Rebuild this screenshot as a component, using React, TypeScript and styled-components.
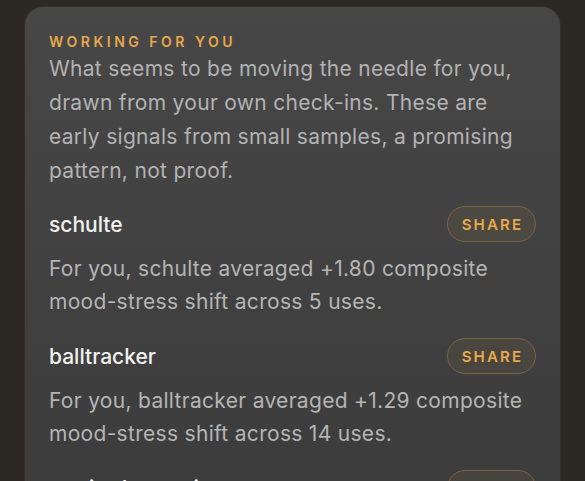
import * as React from 'react';
import styled, { createGlobalStyle } from 'styled-components';

const GlobalStyle = createGlobalStyle`
    html, body {
        margin: 0;
        padding: 0;
        background-color: #2c2823;
        font-family: Inter, "Noto Sans", "Liberation Sans", sans-serif;
        overflow: hidden;
    }
`;

const Page = styled.div`
    padding: 7px 25px 0 25px;
    height: 481px;
    box-sizing: border-box;
`;

const Card = styled.section`
    background: linear-gradient(180deg, #474747 0%, #3e3e3e 60%, #3a3a3a 100%);
    border-radius: 18px;
    padding: 24px 24px 24px 24px;
    min-height: 600px;
    box-shadow: 0 0 0 1px rgba(255, 255, 255, 0.03);
`;

const Eyebrow = styled.h4`
    margin: 0;
    font-size: 14px;
    line-height: 20px;
    font-weight: 600;
    letter-spacing: 3.5px;
    color: #e9a84b;
    text-transform: uppercase;
    padding-top: 1px;
`;

const Intro = styled.p`
    margin: 0;
    font-size: 21px;
    line-height: 34px;
    letter-spacing: 0.3px;
    color: #b3b3b3;
`;

const Item = styled.div`
    margin-top: ${(p: { first?: boolean }) => (p.first ? '18px' : '20px')};
`;

const ItemHead = styled.div`
    display: flex;
    align-items: center;
    justify-content: space-between;
    height: 36px;
`;

const ItemName = styled.span`
    font-size: 21px;
    font-weight: 500;
    color: #f2f2f2;
`;

const ShareButton = styled.button`
    height: 36px;
    width: 89px;
    border-radius: 18px;
    border: 1.5px solid #7b6442;
    background: rgba(233, 168, 75, 0.06);
    color: #eaa94c;
    font-family: inherit;
    font-size: 15px;
    font-weight: 600;
    letter-spacing: 2.2px;
    padding: 0 0 0 2px;
    cursor: pointer;
`;

const ItemText = styled.p`
    margin: 10px 0 0;
    font-size: 21px;
    line-height: 33px;
    letter-spacing: 0.3px;
    color: #b5b5b5;
`;

const items = [
    { name: 'schulte', text: 'For you, schulte averaged +1.80 composite mood-stress shift across 5 uses.' },
    { name: 'balltracker', text: 'For you, balltracker averaged +1.29 composite mood-stress shift across 14 uses.' },
    { name: 'gratitude-stattime', text: 'For you, gratitude-stattime averaged +1.02 composite mood-stress shift across 9 uses.' },
];

const App: React.FunctionComponent = () => (
    <>
        <GlobalStyle />
        <Page>
            <Card>
                <Eyebrow>Working for you</Eyebrow>
                <Intro>
                    What seems to be moving the needle for you, drawn from your own check-ins. These are
                    early signals from small samples, a promising pattern, not proof.
                </Intro>
                {items.map((item, index) => (
                    <Item key={item.name} first={index === 0}>
                        <ItemHead>
                            <ItemName>{item.name}</ItemName>
                            <ShareButton>SHARE</ShareButton>
                        </ItemHead>
                        <ItemText>{item.text}</ItemText>
                    </Item>
                ))}
            </Card>
        </Page>
    </>
);

export default App;
